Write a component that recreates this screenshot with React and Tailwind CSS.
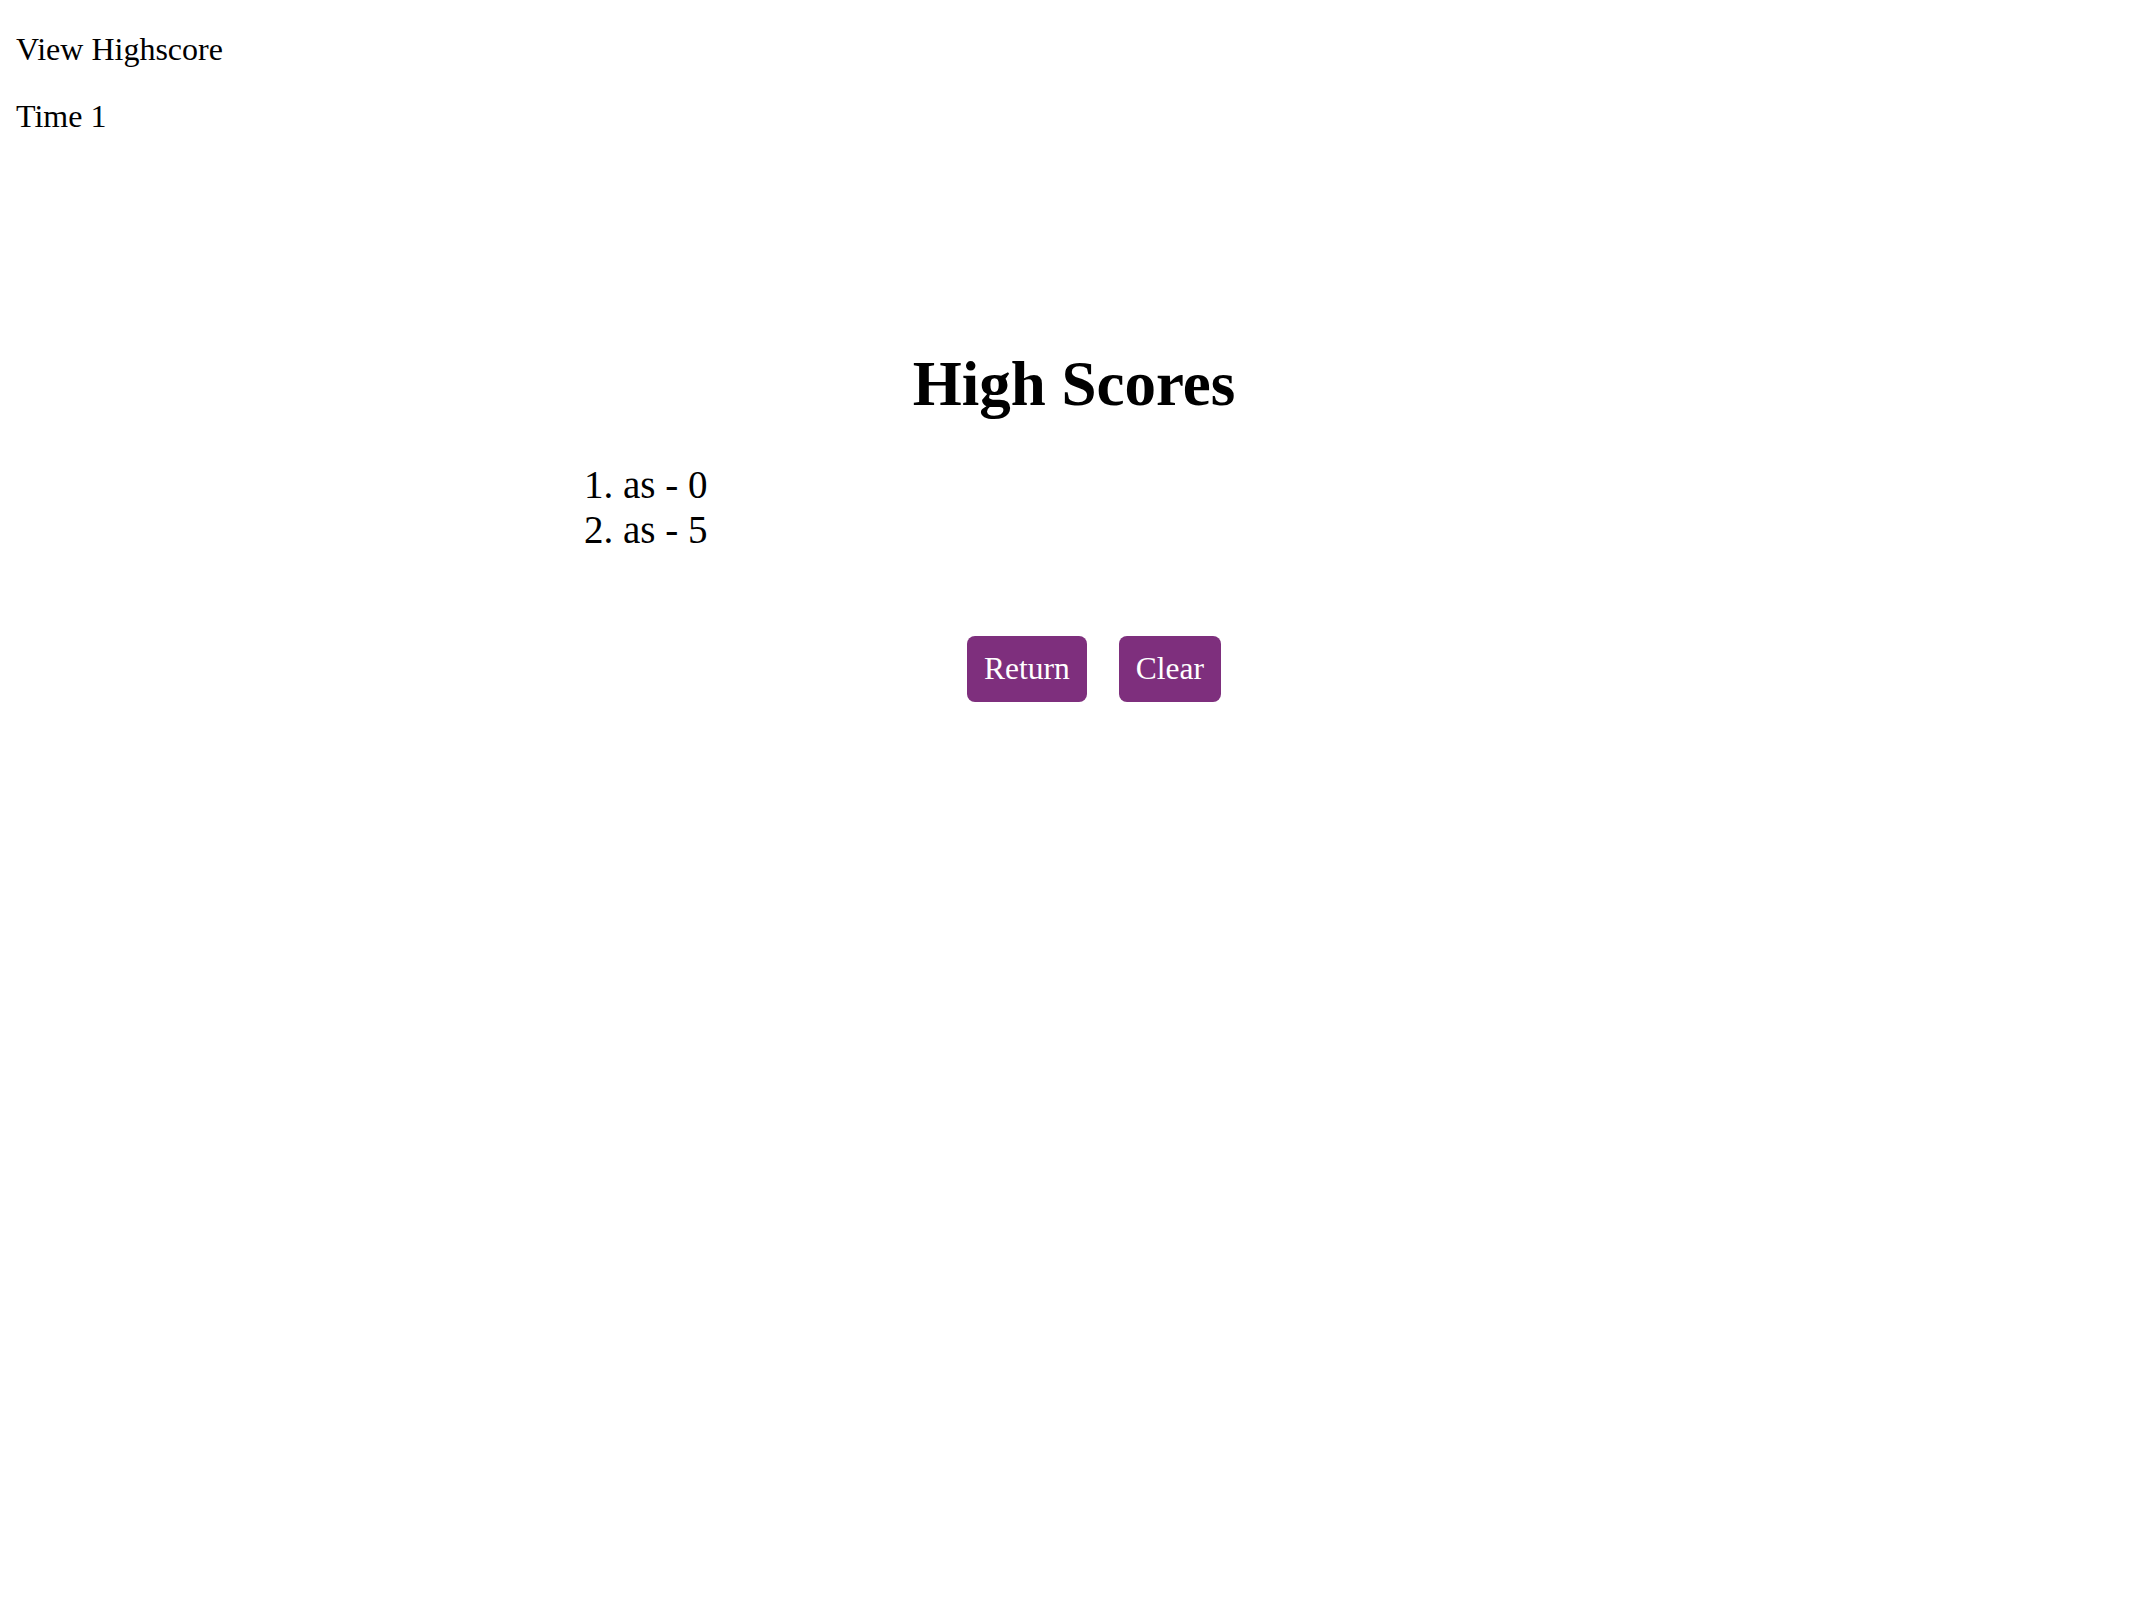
export default function App() {
  return (
    <div className="min-h-screen bg-white text-black" style={{ fontFamily: '"Liberation Serif", "Times New Roman", serif' }}>
      <header className="pl-[16px] pt-[32px] text-[32px]">
        <p className="leading-[35px]">View Highscore</p>
        <p className="mt-[32px] leading-[35px]">Time 1</p>
      </header>
      <main>
        <h1 className="mt-[215px] text-center text-[63px] font-bold leading-[70px]">High Scores</h1>
        <div className="mx-auto mt-[43px] w-[1000px]">
          <ol className="list-inside list-decimal pl-[10px] text-[39px] leading-[45px]">
            <li>as - 0</li>
            <li>as - 5</li>
          </ol>
        </div>
        <div className="mt-[84px] flex justify-center gap-[32px] pl-[40px]">
          <button className="rounded-[8px] bg-[#7e2f7d] px-[17px] py-[15px] text-[31.5px] leading-[36px] text-white">Return</button>
          <button className="rounded-[8px] bg-[#7e2f7d] px-[17px] py-[15px] text-[31.5px] leading-[36px] text-white">Clear</button>
        </div>
      </main>
    </div>
  );
}
